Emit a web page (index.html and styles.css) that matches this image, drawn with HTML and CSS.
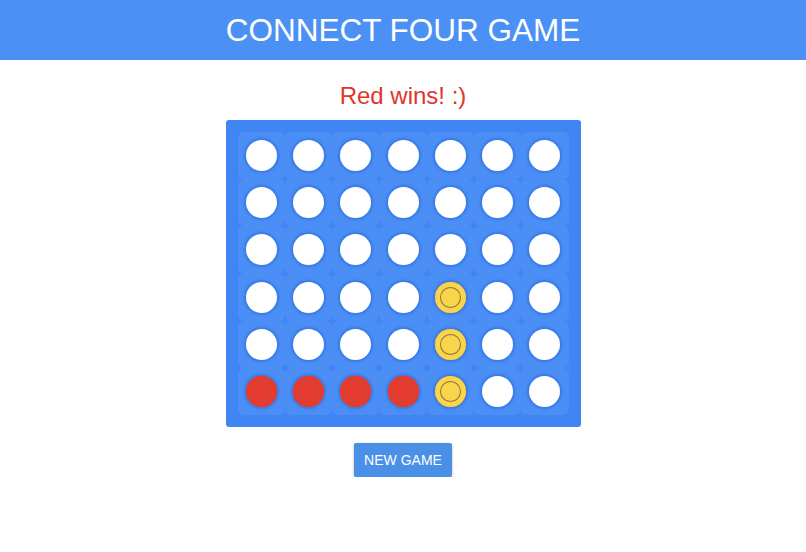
FILE: index.html
```html
<!DOCTYPE html>
<html lang="en">
<head>
<meta charset="utf-8">
<title>Connect Four</title>
<link rel="stylesheet" href="styles.css">
</head>
<body>
<header class="app-header">
  <h1 class="app-title">CONNECT FOUR GAME</h1>
</header>
<main class="game">
  <p class="status">Red wins! :)</p>
  <div class="board">
    <div class="cell"><span class="disc"></span></div>
    <div class="cell"><span class="disc"></span></div>
    <div class="cell"><span class="disc"></span></div>
    <div class="cell"><span class="disc"></span></div>
    <div class="cell"><span class="disc"></span></div>
    <div class="cell"><span class="disc"></span></div>
    <div class="cell"><span class="disc"></span></div>

    <div class="cell"><span class="disc"></span></div>
    <div class="cell"><span class="disc"></span></div>
    <div class="cell"><span class="disc"></span></div>
    <div class="cell"><span class="disc"></span></div>
    <div class="cell"><span class="disc"></span></div>
    <div class="cell"><span class="disc"></span></div>
    <div class="cell"><span class="disc"></span></div>

    <div class="cell"><span class="disc"></span></div>
    <div class="cell"><span class="disc"></span></div>
    <div class="cell"><span class="disc"></span></div>
    <div class="cell"><span class="disc"></span></div>
    <div class="cell"><span class="disc"></span></div>
    <div class="cell"><span class="disc"></span></div>
    <div class="cell"><span class="disc"></span></div>

    <div class="cell"><span class="disc"></span></div>
    <div class="cell"><span class="disc"></span></div>
    <div class="cell"><span class="disc"></span></div>
    <div class="cell"><span class="disc"></span></div>
    <div class="cell"><span class="disc disc-yellow"></span></div>
    <div class="cell"><span class="disc"></span></div>
    <div class="cell"><span class="disc"></span></div>

    <div class="cell"><span class="disc"></span></div>
    <div class="cell"><span class="disc"></span></div>
    <div class="cell"><span class="disc"></span></div>
    <div class="cell"><span class="disc"></span></div>
    <div class="cell"><span class="disc disc-yellow"></span></div>
    <div class="cell"><span class="disc"></span></div>
    <div class="cell"><span class="disc"></span></div>

    <div class="cell"><span class="disc disc-red"></span></div>
    <div class="cell"><span class="disc disc-red"></span></div>
    <div class="cell"><span class="disc disc-red"></span></div>
    <div class="cell"><span class="disc disc-red"></span></div>
    <div class="cell"><span class="disc disc-yellow"></span></div>
    <div class="cell"><span class="disc"></span></div>
    <div class="cell"><span class="disc"></span></div>
  </div>
  <button class="new-game" type="button">NEW GAME</button>
</main>
</body>
</html>
```

FILE: styles.css
```css
* {
  box-sizing: border-box;
}

body {
  margin: 0;
  font-family: "Liberation Sans", Arial, Helvetica, sans-serif;
  background: #ffffff;
}

.app-header {
  height: 60px;
  background: #4a90f5;
  display: flex;
  align-items: center;
  justify-content: center;
}

.app-title {
  margin: 0;
  color: #ffffff;
  font-size: 31.5px;
  font-weight: normal;
}

.game {
  display: flex;
  flex-direction: column;
  align-items: center;
}

.status {
  margin: 22px 0 0;
  height: 28px;
  line-height: 28px;
  color: #e0352b;
  font-size: 24px;
}

.board {
  margin-top: 10px;
  width: 355px;
  padding: 12px;
  display: grid;
  grid-template-columns: repeat(7, 47.3px);
  grid-auto-rows: 47.2px;
  background: #3f86f4;
  border-radius: 3px;
}

.cell {
  display: flex;
  align-items: center;
  justify-content: center;
  background: #4a8ef6;
  border-radius: 6px;
}

/* empty slot: white hole with a soft darker rim */
.disc {
  width: 31px;
  height: 31px;
  border-radius: 50%;
  background: #ffffff;
  box-shadow: 0 0 0 1px #3c7fe6, 0 0 2px 2px rgba(45, 105, 215, 0.55);
}

.disc-red {
  background: #e53a2e;
  box-shadow: 0 0 0 1px #3f7fe6, 0 0 2px 2px rgba(45, 105, 215, 0.55),
    inset 0 0 0 5px #e53a2e, inset 0 0 0 6px #cc4a40;
}

.disc-yellow {
  background: #fad44c;
  box-shadow: 0 0 0 1px #3f7fe6, 0 0 2px 2px rgba(45, 105, 215, 0.55),
    inset 0 0 0 5px #fad44c, inset 0 0 0 6px #86763a;
}

.new-game {
  margin-top: 16px;
  width: 98px;
  height: 34px;
  background: #4a90e6;
  color: #ffffff;
  border: none;
  border-radius: 2px;
  font-family: "Liberation Sans", Arial, sans-serif;
  font-size: 14px;
  box-shadow: 0 1px 3px rgba(0, 0, 0, 0.25);
  cursor: pointer;
}
```
